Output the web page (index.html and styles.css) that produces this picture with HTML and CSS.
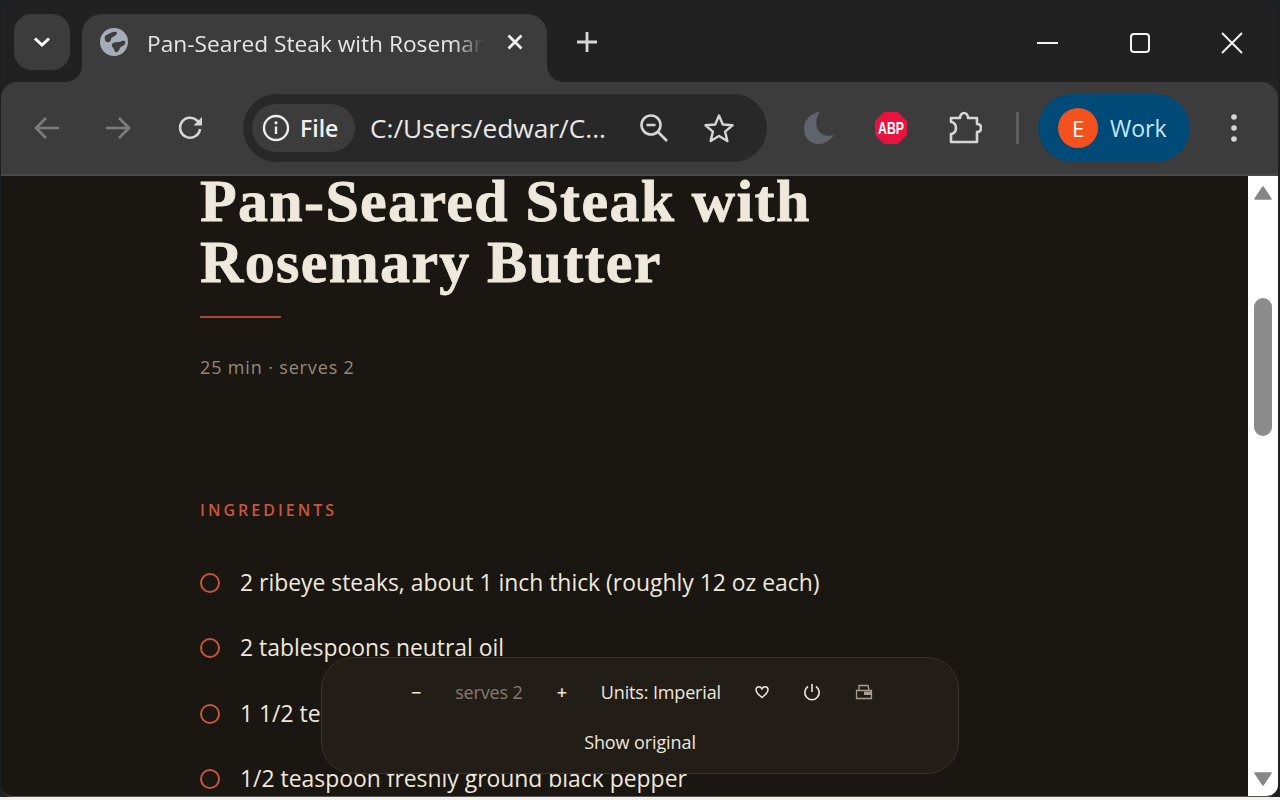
FILE: index.html
```html
<!DOCTYPE html>
<html>
<head>
<title>Pan-Seared Steak with Rosemary Butter</title>
<link rel="stylesheet" href="styles.css">
</head>
<body>
<div class="window">
    <div class="tabstrip">
        <div class="tabSearch">
            <svg width="20" height="20" viewBox="0 0 20 20"><path d="M3 6.500 10 13 17 6.500" fill="none" stroke="#fff" stroke-width="3"/></svg>
        </div>
        <div class="tab">
            <svg class="globe" width="28" height="28" viewBox="0 0 28 28">
                <circle cx="14" cy="14" r="14" fill="#a6adb8"/>
                <path d="M5 8C9 6 12 3 16 4 19 5 15 8 13 9 10 10 12 13 9 14 6 15 4 12 5 8ZM12 16C15 13 19 15 22 13 25 12 26 14 25 16 24 18 21 18 20 20 19 23 17 25 15 24 15 21 11 19 12 16Z" fill="#3c3c3c"/>
            </svg>
            <span class="tabTitle">Pan-Seared Steak with Rosemary Butter</span>
            <svg class="tabClose" width="18" height="18" viewBox="0 0 18 18"><path d="M2.500 2.500 15.500 15.500M15.500 2.500 2.500 15.500" stroke="#f1f1f1" stroke-width="2.800"/></svg>
        </div>
        <svg class="newTab" width="22" height="22" viewBox="0 0 22 22"><path d="M11 1V21M1 11H21" stroke="#d8d8d8" stroke-width="2.800"/></svg>
        <div class="winControls">
            <svg width="22" height="22" viewBox="0 0 22 22"><path d="M0 11H21" stroke="#f2f2f2" stroke-width="2"/></svg>
            <svg width="22" height="22" viewBox="0 0 22 22"><rect x="2" y="2" width="18" height="18" rx="3" fill="none" stroke="#f2f2f2" stroke-width="2"/></svg>
            <svg width="22" height="22" viewBox="0 0 22 22"><path d="M1 1 21 21M21 1 1 21" stroke="#f2f2f2" stroke-width="2"/></svg>
        </div>
    </div>

    <div class="toolbar">
        <svg class="navIcon" width="28" height="28" viewBox="0 0 28 28"><path d="M26 14H3M13 4 3 14 13 24" fill="none" stroke="#7d7d7d" stroke-width="2.600"/></svg>
        <svg class="navIcon" width="28" height="28" viewBox="0 0 28 28"><path d="M2 14H25M15 4 25 14 15 24" fill="none" stroke="#7d7d7d" stroke-width="2.600"/></svg>
        <svg class="navIcon" width="28" height="28" viewBox="0 0 28 28"><path d="M23 15A10 10 0 1 1 20 6.500L24 10" fill="none" stroke="#d6d6d6" stroke-width="2.600"/><path d="M25 3V11.500H16.500Z" fill="#d6d6d6"/></svg>
        <div class="omnibox">
            <div class="chip">
                <svg width="28" height="28" viewBox="0 0 28 28"><circle cx="14" cy="14" r="12" fill="none" stroke="#ececec" stroke-width="2.400"/><path d="M14 12.500V20" stroke="#ececec" stroke-width="2.400"/><circle cx="14" cy="8.800" r="1.600" fill="#ececec"/></svg>
                <span>File</span>
            </div>
            <span class="url">C:/Users/edwar/C...</span>
            <svg class="zoomIcon" width="30" height="30" viewBox="0 0 30 30"><circle cx="12" cy="12" r="9.500" fill="none" stroke="#d6d6d6" stroke-width="2.600"/><path d="M7.500 12H16.500M19 19 28 28" stroke="#d6d6d6" stroke-width="2.600"/></svg>
            <svg class="starIcon" width="32" height="32" viewBox="0 0 32 32"><path d="M16 3.500 19.800 12.500 29.500 13.300 22.100 19.600 24.400 29 16 24 7.600 29 9.900 19.600 2.500 13.300 12.200 12.500Z" fill="none" stroke="#d6d6d6" stroke-width="2.400" stroke-linejoin="round"/></svg>
        </div>
        <svg class="moon" width="32" height="34" viewBox="0 0 32 34"><path d="M17 1C8 2 1 8 1 18 1 27 8 33 15 33 23 33 28 28 31 24 25 26 18 24 15 19 12 13 13 6 17 1Z" fill="#5f636b"/></svg>
        <svg class="abp" width="34" height="34" viewBox="0 0 34 34">
            <path d="M10 1H24L33 10V24L24 33H10L1 24V10Z" fill="#e8143f"/>
            <text x="17" y="23" text-anchor="middle" textLength="26" lengthAdjust="spacingAndGlyphs" class="abpText">ABP</text>
        </svg>
        <svg class="puzzle" width="34" height="34" viewBox="0 0 34 34"><path d="M3 7H12C12 4 14 2 16 2 18 2 20 4 20 7H29V13C32 13 33 15 33 17 33 19 32 21 29 21V31H3V23C6 23 8 20 8 17 8 14 6 11 3 11Z" fill="none" stroke="#d6d6d6" stroke-width="2.600" stroke-linejoin="round"/></svg>
        <div class="divider"></div>
        <div class="profile">
            <span class="avatar">E</span>
            <span>Work</span>
        </div>
        <svg class="menuIcon" width="8" height="30" viewBox="0 0 8 30"><circle cx="4" cy="4" r="2.800" fill="#d6d6d6"/><circle cx="4" cy="15" r="2.800" fill="#d6d6d6"/><circle cx="4" cy="26" r="2.800" fill="#d6d6d6"/></svg>
    </div>

    <div class="content">
        <div class="page">
            <h1>Pan-Seared Steak with Rosemary Butter</h1>
            <div class="rule"></div>
            <p class="meta">25 min · serves 2</p>
            <h2>INGREDIENTS</h2>
            <ul class="ingredients">
                <li>2 ribeye steaks, about 1 inch thick (roughly 12 oz each)</li>
                <li>2 tablespoons neutral oil</li>
                <li>1 1/2 teaspoons kosher salt</li>
                <li>1/2 teaspoon freshly ground black pepper</li>
            </ul>
            <div class="panel">
                <div class="panelRow">
                    <span class="panelBtn">−</span>
                    <span class="serves">serves 2</span>
                    <span class="panelBtn">+</span>
                    <span class="units">Units: Imperial</span>
                    <svg width="14" height="14" viewBox="0 0 14 14"><path d="M7 12.500C3 9.500 1 7.500 1 4.800 1 3 2.300 1.800 3.900 1.800 5.200 1.800 6.400 2.600 7 3.800 7.600 2.600 8.800 1.800 10.100 1.800 11.700 1.800 13 3 13 4.800 13 7.500 11 9.500 7 12.500Z" fill="none" stroke="#eee7dc" stroke-width="1.500"/></svg>
                    <svg width="18" height="18" viewBox="0 0 18 18"><path d="M9 1V9M5 3.500A7.200 7.200 0 1 0 13 3.500" fill="none" stroke="#eee7dc" stroke-width="1.600"/></svg>
                    <svg width="18" height="16" viewBox="0 0 18 16"><path d="M4 6V1.500H13L14 6M1.500 6.500H16.500V14.500H1.500Z" fill="none" stroke="#a89f92" stroke-width="1.300"/><path d="M9 7.500H16V11H9Z" fill="#a89f92"/></svg>
                </div>
                <div class="showOriginal">Show original</div>
            </div>
        </div>
        <div class="scrollbar">
            <svg width="18" height="14" viewBox="0 0 18 14"><path d="M9 1 17 13H1Z" fill="#868686" stroke="#868686" stroke-width="1.500" stroke-linejoin="round"/></svg>
            <div class="thumb"></div>
            <svg width="18" height="14" viewBox="0 0 18 14"><path d="M9 13 17 1H1Z" fill="#868686" stroke="#868686" stroke-width="1.500" stroke-linejoin="round"/></svg>
        </div>
    </div>
</div>
</body>
</html>
```

FILE: styles.css
```css
html, body{
    margin: 0;
    height: 100%;
    overflow: hidden;
    background: linear-gradient(to bottom, #1c2020 797px, #f4f1ec 797px);
}
.window{
    margin: 2px 2px 0 1px;
    height: 795px;
    box-sizing: border-box;
    border-bottom: 1px solid #555;
    border-radius: 12px;
    overflow: hidden;
    background-color: #202120;
    display: flex;
    flex-direction: column;
    font-family: "Open Sans", "Noto Sans", sans-serif;
}

/* tab strip */
.tabstrip{
    height: 80px;
    flex: none;
    display: flex;
    align-items: flex-start;
    padding-left: 13px;
}
.tabSearch{
    width: 56px;
    height: 56px;
    margin-top: 12px;
    border-radius: 18px;
    background-color: #3c3c3c;
    display: flex;
    align-items: center;
    justify-content: center;
}
.tab{
    width: 465px;
    height: 68px;
    margin-top: 12px;
    margin-left: 12px;
    border-radius: 20px 20px 0 0;
    background-color: #3c3c3c;
    display: flex;
    align-items: center;
    padding-bottom: 12px;
    box-sizing: border-box;
    padding-left: 18px;
    position: relative;
}
.tab::before, .tab::after{
    content: "";
    position: absolute;
    bottom: 0;
    width: 16px;
    height: 16px;
}
.tab::before{
    left: -16px;
    background: radial-gradient(circle at 0 0, transparent 15.500px, #3c3c3c 16px);
}
.tab::after{
    right: -16px;
    background: radial-gradient(circle at 100% 0, transparent 15.500px, #3c3c3c 16px);
}
.globe{
    flex: none;
}
.tabTitle{
    width: 336px;
    margin-left: 19px;
    margin-top: 2px;
    overflow: hidden;
    white-space: nowrap;
    color: #e6e6e6;
    font-size: 22.700px;
    -webkit-mask-image: linear-gradient(to right, #000 308px, transparent 336px);
    mask-image: linear-gradient(to right, #000 308px, transparent 336px);
}
.tabClose{
    margin-left: 23px;
    flex: none;
}
.newTab{
    margin-top: 29px;
    margin-left: 29px;
}
.winControls{
    margin-left: auto;
    margin-top: 30px;
    display: flex;
    gap: 70px;
    padding-right: 35px;
}

/* toolbar */
.toolbar{
    height: 94px;
    flex: none;
    box-sizing: border-box;
    background-color: #3c3c3c;
    border-radius: 16px 16px 0 0;
    border-bottom: 2px solid #4a4a4a;
    display: flex;
    align-items: center;
    padding-left: 32px;
}
.navIcon{
    margin-right: 43px;
    flex: none;
}
.navIcon:nth-child(2){
    margin-right: 45px;
}
.navIcon:nth-child(3){
    margin-right: 38px;
}
.omnibox{
    width: 524px;
    height: 68px;
    flex: none;
    border-radius: 34px;
    background-color: #282828;
    display: flex;
    align-items: center;
    padding-left: 9px;
    box-sizing: border-box;
}
.chip{
    width: 103px;
    height: 48px;
    box-sizing: border-box;
    padding-left: 10px;
    border-radius: 24px;
    background-color: #3c3c3c;
    display: flex;
    align-items: center;
    gap: 10px;
    color: #f0f0f0;
    font-size: 23px;
    font-weight: 600;
}
.url{
    margin-left: 15px;
    width: 254px;
    color: #e8e8e8;
    font-size: 26.300px;
    white-space: nowrap;
}
.zoomIcon{
    margin-left: 15px;
    flex: none;
}
.starIcon{
    margin-left: 34px;
    flex: none;
}
.moon{
    margin-left: 36px;
    flex: none;
}
.abp{
    margin-left: 39px;
    flex: none;
}
.abpText{
    fill: #fff;
    font-family: "Liberation Sans", sans-serif;
    font-size: 17px;
    font-weight: 700;
}
.puzzle{
    margin-left: 40px;
    flex: none;
}
.divider{
    width: 3px;
    height: 32px;
    margin-left: 34px;
    background-color: #5f5f5f;
    flex: none;
}
.profile{
    width: 152px;
    height: 68px;
    margin-left: 19px;
    flex: none;
    box-sizing: border-box;
    padding-left: 20px;
    border-radius: 34px;
    background-color: #004a77;
    display: flex;
    align-items: center;
    gap: 12px;
    color: #c2e7ff;
    font-size: 23px;
}
.avatar{
    width: 40px;
    height: 40px;
    border-radius: 50%;
    background-color: #f4511e;
    color: #fff;
    font-size: 22px;
    display: flex;
    align-items: center;
    justify-content: center;
}
.menuIcon{
    margin-left: 40px;
    flex: none;
}

/* page */
.content{
    flex: 1;
    min-height: 0;
    display: flex;
}
.page{
    flex: 1;
    position: relative;
    overflow: hidden;
    background-color: #1a1612;
    padding-left: 199px;
}
h1{
    margin: -5px 0 0 0;
    width: 660px;
    font-family: "Liberation Serif", serif;
    font-size: 60px;
    line-height: 61px;
    font-weight: 700;
    letter-spacing: 1.350px;
    -webkit-text-stroke: 0.8px #efe8dc;
    color: #efe8dc;
}
.rule{
    width: 81px;
    height: 2px;
    margin-top: 23px;
    background-color: #a8452f;
}
.meta{
    margin: 37px 0 0 0;
    color: #968a7a;
    font-size: 18px;
    letter-spacing: 0.850px;
}
h2{
    margin: 120px 0 0 0;
    color: #c9553c;
    font-size: 16px;
    font-weight: 600;
    letter-spacing: 3px;
}
.ingredients{
    list-style: none;
    margin: 47px 0 0 0;
    padding: 0;
}
.ingredients li{
    height: 65.400px;
    line-height: 30px;
    padding-left: 40px;
    position: relative;
    color: #efe8dc;
    font-size: 22.900px;
    white-space: nowrap;
}
.ingredients li::before{
    content: "";
    position: absolute;
    left: 0;
    top: 5px;
    width: 16px;
    height: 16px;
    border: 2px solid #c9553c;
    border-radius: 50%;
}

/* floating controls */
.panel{
    position: absolute;
    left: 320px;
    top: 481px;
    width: 638px;
    height: 117px;
    box-sizing: border-box;
    border: 1px solid #3a332b;
    border-radius: 32px;
    background-color: #231d18;
    color: #eee7dc;
    font-size: 18px;
    display: flex;
    flex-direction: column;
    align-items: center;
}
.panelRow{
    display: flex;
    align-items: center;
    gap: 34px;
    margin-top: 21px;
    padding-left: 4px;
    height: 26px;
    letter-spacing: -0.150px;
}
.panelBtn{
    font-weight: 600;
}
.serves{
    color: #857b6d;
}
.showOriginal{
    margin-top: 25px;
    letter-spacing: -0.100px;
}

/* scrollbar */
.scrollbar{
    width: 30px;
    flex: none;
    background-color: #fff;
    display: flex;
    flex-direction: column;
    align-items: center;
    padding-top: 10px;
    padding-bottom: 10px;
    box-sizing: border-box;
}
.thumb{
    width: 18px;
    height: 138px;
    margin-top: 98px;
    margin-bottom: auto;
    border-radius: 9px;
    background-color: #8c8c8c;
}
```
